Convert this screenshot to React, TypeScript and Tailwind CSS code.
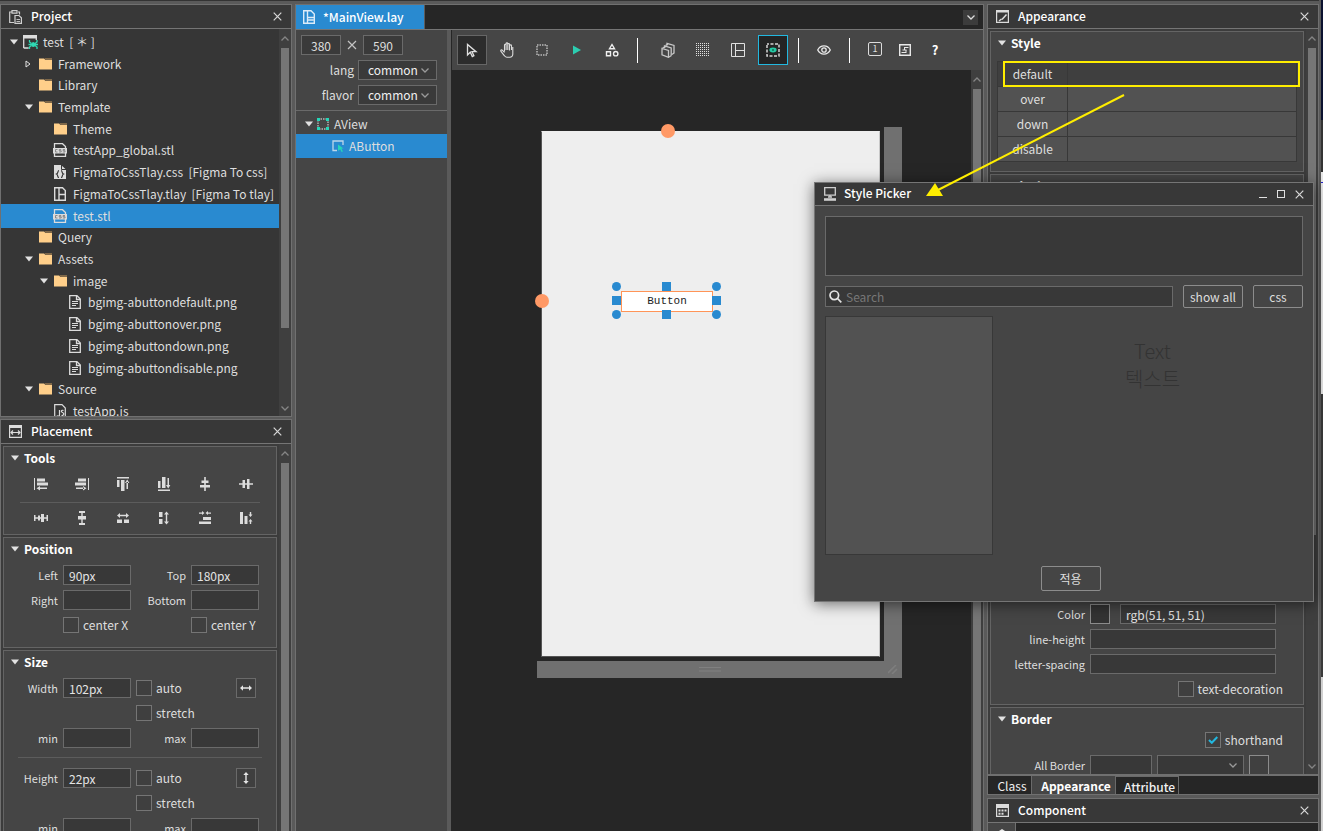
import React, { useId } from "react";

type Kids = { children?: React.ReactNode };

const CloseIcon = () => (
  <svg width="9" height="9" viewBox="0 0 9 9" fill="none" stroke="#d8d8d8" strokeWidth="1.2">
    <path d="M.7.7l7.6 7.6M8.3.7L.7 8.3" />
  </svg>
);

const Chevron = ({ up, tone = "#9a9a9a" }: { up?: boolean; tone?: string }) => (
  <svg width="8" height="5" viewBox="0 0 8 5" fill="none" stroke={tone} strokeWidth="1.3">
    <path d={up ? "M.5 4.5L4 1l3.500 3.500" : "M.5.5L4 4 7.500.5"} />
  </svg>
);

const Triangle = () => (
  <svg width="8" height="6" viewBox="0 0 8 6" fill="#e2e2e2">
    <path d="M0 .5h8L4 5.500z" />
  </svg>
);

const TriangleClosed = () => (
  <svg width="6" height="8" viewBox="0 0 6 8" fill="none" stroke="#e2e2e2">
    <path d="M1 1l4 3-4 3z" />
  </svg>
);

function Header({ icon, title }: { icon: React.ReactNode; title: string }) {
  return (
    <header className="flex h-6 shrink-0 items-center border-b border-[#757575] bg-[#383838] pl-2 pr-[9px]">
      <span className="flex w-[22px] items-center">{icon}</span>
      <h2 className="flex-1 pb-[2px] font-medium text-white">{title}</h2>
      <button aria-label={`Close ${title}`} className="p-0">
        <CloseIcon />
      </button>
    </header>
  );
}

function ScrollBar({ thumb, down }: { thumb: string; down?: boolean }) {
  return (
    <div aria-hidden="true" className="flex w-3 shrink-0 flex-col items-center bg-[#3f3f3f]">
      <div className="flex h-[19px] shrink-0 items-center justify-center">
        <Chevron up tone="#858585" />
      </div>
      <div className={`w-2 bg-[#767676] ${thumb}`} />
      {down && (
        <div className="mt-auto flex h-4 shrink-0 items-center">
          <Chevron tone="#858585" />
        </div>
      )}
    </div>
  );
}

/* ---------- project tree ---------- */

const Folder = () => (
  <svg className="ml-px" width="13" height="12" viewBox="0 0 13 12" fill="#ffcf8a">
    <path d="M0 .5h5l1.500 1.500H13V11.500H0z" />
    <path d="M5.500.5h7.500v1H6.500z" fill="#c79a5c" />
  </svg>
);

const AppIcon = () => (
  <svg width="15" height="14" viewBox="0 0 15 14" fill="none">
    <path d="M.7 13V1h12.600v4M.7 13h5" stroke="#dcdcdc" strokeWidth="1.300" />
    <path d="M0 0h14v3.500H0z" fill="#dcdcdc" />
    <g stroke="#2fd9b4" strokeWidth="1.300">
      <path d="M6.500 5v2l2 1.500M14 5v2l-2 1.500M5.500 9.500h9.500M6.500 14v-2l2-1.500M14 14v-2l-2-1.500" />
    </g>
    <ellipse cx="10.250" cy="9.500" rx="2" ry="2.600" fill="#2fd9b4" />
  </svg>
);

const CssBadge = () => (
  <svg width="14" height="14" viewBox="0 0 14 14" fill="none">
    <path d="M1.500 5V.7h8l3 2.800V5M1.500 10v3.300h11V10" stroke="#dcdcdc" strokeWidth="1.300" />
    <path d="M0 5h14v5.500H0z" fill="#dcdcdc" />
    <path
      d="M4.500 6.500H2.500v2.500h2M8.200 6.500H6.200v1.200h2V9H6M12 6.500h-2v1.200h2V9h-2.200"
      stroke="#777"
      strokeWidth=".8"
    />
  </svg>
);

const BraceFile = () => (
  <svg className="ml-px" width="12" height="14" viewBox="0 0 12 14" fill="none">
    <path d="M0 0h7l5 4.500V14H0z" fill="#dcdcdc" />
    <path d="M7.500 0v4.500H12" stroke="#363636" />
    <path
      d="M5 5.500C3.500 5.500 4.500 8 2.500 9c2 1 .5 3.500 2.500 3.500M7 5.500C8.500 5.500 7.500 8 9.500 9c-2 1-.5 3.500-2.500 3.500"
      stroke="#363636"
      strokeWidth="1.200"
    />
  </svg>
);

const LayoutFile = () => (
  <svg className="ml-px" width="12" height="14" viewBox="0 0 12 14" fill="none" stroke="#dcdcdc" strokeWidth="1.400">
    <path d="M.7.7h7.800l2.800 2.800v9.800H.7zM5 .7v12.600M5 7.500h6.300" />
  </svg>
);

const TextFile = () => (
  <svg className="ml-px" width="12" height="14" viewBox="0 0 12 14" fill="none" stroke="#dcdcdc" strokeWidth="1.300">
    <path d="M.7.7h7.300l3.300 3.300v9.300H.7z" />
    <path d="M7.500 1v3.500h3.800" />
    <path d="M3 6.500h6M3 8.500h6M3 10.500h4" strokeWidth="1" />
  </svg>
);

const JsFile = () => (
  <svg className="ml-px" width="12" height="14" viewBox="0 0 12 14" fill="none" stroke="#dcdcdc" strokeWidth="1.200">
    <path d="M3 13.300H.7V.7h7.300l3.300 3.300v9.300H10" />
    <path d="M5.500 6v5c0 1.500-2 1.500-2.500.5M9.500 6.500C7.500 5.500 6.500 8 8.500 8.500s1.500 3.500-1 2.700" />
  </svg>
);

type Node = {
  name: string;
  depth: string;
  icon: React.ReactNode;
  state?: "open" | "closed";
  selected?: boolean;
};

const pad0 = "pl-[9px]";
const pad1 = "pl-6";
const pad2 = "pl-[39px]";
const pad3 = "pl-[54px]";

const nodes: Node[] = [
  { name: "test  [ ＊ ]", depth: pad0, icon: <AppIcon />, state: "open" },
  { name: "Framework", depth: pad1, icon: <Folder />, state: "closed" },
  { name: "Library", depth: pad1, icon: <Folder /> },
  { name: "Template", depth: pad1, icon: <Folder />, state: "open" },
  { name: "Theme", depth: pad2, icon: <Folder /> },
  { name: "testApp_global.stl", depth: pad2, icon: <CssBadge /> },
  { name: "FigmaToCssTlay.css  [Figma To css]", depth: pad2, icon: <BraceFile /> },
  { name: "FigmaToCssTlay.tlay  [Figma To tlay]", depth: pad2, icon: <LayoutFile /> },
  { name: "test.stl", depth: pad2, icon: <CssBadge />, selected: true },
  { name: "Query", depth: pad1, icon: <Folder /> },
  { name: "Assets", depth: pad1, icon: <Folder />, state: "open" },
  { name: "image", depth: pad2, icon: <Folder />, state: "open" },
  { name: "bgimg-abuttondefault.png", depth: pad3, icon: <TextFile /> },
  { name: "bgimg-abuttonover.png", depth: pad3, icon: <TextFile /> },
  { name: "bgimg-abuttondown.png", depth: pad3, icon: <TextFile /> },
  { name: "bgimg-abuttondisable.png", depth: pad3, icon: <TextFile /> },
  { name: "Source", depth: pad1, icon: <Folder />, state: "open" },
  { name: "testApp.js", depth: pad2, icon: <JsFile /> },
];

function ProjectPanel() {
  return (
    <section className="flex h-[413px] shrink-0 flex-col border border-[#707070] bg-[#363636]">
      <Header
        title="Project"
        icon={
          <svg width="13" height="14" viewBox="0 0 13 14" fill="none" stroke="#cfcfcf" strokeWidth="1.200">
            <path d="M5 12.500H.7V2H3M9 2h1.500v2.500" />
            <path d="M3 .7h5v2.500H3z" />
            <path d="M6 5.500h4l2.400 2.200v5.700H6z" />
            <path d="M7.500 9.500h3.500M7.500 11.500h3.500" strokeWidth=".9" />
          </svg>
        }
      />
      <div className="flex min-h-0 flex-1">
        <div className="min-w-0 flex-1 overflow-hidden pt-[2px]">
          <ul className="flex h-[391px] flex-col">
            {nodes.map((n) => (
              <li key={n.name} className="flex min-h-0 flex-1 items-center">
                <div
                  className={`flex h-6 w-full shrink-0 items-center whitespace-pre ${n.depth} ${
                    n.selected ? "bg-[#298ad0]" : ""
                  }`}
                >
                  <span className="flex w-[13px] shrink-0 items-center">
                    {n.state === "open" && <Triangle />}
                    {n.state === "closed" && <TriangleClosed />}
                  </span>
                  <span className="flex w-5 shrink-0 items-center">{n.icon}</span>
                  <span>{n.name}</span>
                </div>
              </li>
            ))}
          </ul>
        </div>
        <ScrollBar thumb="h-[280px]" down />
      </div>
    </section>
  );
}

/* ---------- form pieces ---------- */

const fieldBox = "h-5 border border-[#6a6a6a] bg-[#383838] px-[5px] text-xs text-[#e4e4e4] outline-none";

function Check({ label, checked, id }: { label: string; checked?: boolean; id: string }) {
  return (
    <span className="flex h-5 items-center gap-1">
      <span className="relative flex">
        <input
          id={id}
          type="checkbox"
          defaultChecked={checked}
          className="peer size-4 appearance-none border border-[#757575] bg-[#3f3f3f]"
        />
        <svg
          className="pointer-events-none absolute left-[3px] top-1 hidden peer-checked:block"
          width="10"
          height="8"
          viewBox="0 0 10 8"
          fill="none"
          stroke="#22b8e0"
          strokeWidth="2"
        >
          <path d="M1 4l2.800 2.800L9.300 1" />
        </svg>
      </span>
      <label htmlFor={id} className="whitespace-nowrap">
        {label}
      </label>
    </span>
  );
}

function Section({ title, className, children }: Kids & { title: string; className: string }) {
  return (
    <section className={`shrink-0 overflow-hidden border border-[#646464] bg-[#454545] ${className}`}>
      <h3>
        <button className="flex h-[22px] items-center gap-[5px] pl-[7px] font-bold text-white">
          <Triangle />
          {title}
        </button>
      </h3>
      {children}
    </section>
  );
}

function Labelled({ label, value }: { label: string; value?: string }) {
  const id = useId();
  return (
    <>
      <label htmlFor={id} className="pr-[5px] text-right text-[11px]">
        {label}
      </label>
      <input id={id} defaultValue={value} className={`${fieldBox} w-full`} />
    </>
  );
}

const grid4 = "grid grid-cols-[56px_68px_60px_68px] items-center gap-y-[5px] pl-[3px]";

/* Each alignment glyph is a set of solid bars on a 14px square. */
const tools: { name: string; d: string }[] = [
  { name: "Align left", d: "M0 1h1v12H0zM3 1.500h8v3H3zM3 5.500h11v3H3zM5 10.500h8v1.500H5zM2.500 11.200L6 9v4.400z" },
  { name: "Align right", d: "M13 1h1v12h-1zM3 1.500h8v3H3zM0 5.500h11v3H0zM1 10.500h8v1.500H1zM11.500 11.200L8 9v4.400z" },
  { name: "Align top", d: "M1 0h12v1.500H1zM1 3h2.500v7H1zM5 3h3.500v11H5zM10.500 5h1.500v7h-1.500zM11.200 2.500L9 6h4.400z" },
  { name: "Align bottom", d: "M1 12.500h12V14H1zM1 4h2.500v7H1zM5 0h3.500v11H5zM10.500 1h1.500v7h-1.500zM11.200 11.500L9 8h4.400z" },
  { name: "Align center", d: "M6.200 0h1.600v14H6.200zM3.500 3.500h7v2.500h-7zM2 8h10v2.500H2z" },
  { name: "Align middle", d: "M0 6.200h14v1.600H0zM3.500 3h2.500v8H3.500zM8 2h2.500v10H8z" },
  { name: "Distribute horizontally", d: "M0 4h1.500v6H0zM1.500 6.300h12v1.400h-12zM4 4.500h2v5H4zM7 3h3v8H7zM12.500 4h1.500v6h-1.500z" },
  { name: "Distribute vertically", d: "M4 0h6v2H4zM6.300 2h1.400v10H6.300zM3 5h8v3.500H3zM4 12h6v2H4z" },
  { name: "Equal width", d: "M1 4.500l3-2.500v1.800h6V2l3 2.500L10 7V5.200H4V7zM1 8.500h5V12H1zM8 8.500h5V12H8z" },
  { name: "Equal height", d: "M2 1h3.500v5H2zM2 8h3.500v5H2zM9.500 .5l2.500 3h-1.800v7H12l-2.500 3-2.500-3h1.800v-7H7z" },
  { name: "Space rows", d: "M1 1.500h3V0l2.500 2L4 4V2.700H1zM13 1.500h-3V0L7.500 2 10 4V2.700h3zM5 6h8v3H5zM1 10.500h12V13H1z" },
  { name: "Space columns", d: "M1 1h3v12H1zM5.500 5h3v8h-3zM11.500 6L9.500 3.500h1.300V1h1.400v2.500h1.300zM11.500 8l2 2.500h-1.300V13h-1.400v-2.500H9.500z" },
];

function ToolRow({ items }: { items: typeof tools }) {
  return (
    <div className="grid grid-cols-[repeat(6,41px)] pl-4">
      {items.map((t) => (
        <button key={t.name} aria-label={t.name} className="flex h-[30px] items-center justify-center">
          <svg width="14" height="14" viewBox="0 0 14 14" fill="#dcdcdc">
            <path d={t.d} />
          </svg>
        </button>
      ))}
    </div>
  );
}

function SizeRows({ label, value, vertical }: { label: string; value: string; vertical?: boolean }) {
  const id = useId();
  return (
    <div className="flex flex-col gap-[5px]">
      <div className="flex items-center pl-[3px]">
        <label htmlFor={id} className="w-14 pr-[5px] text-right text-[11px]">
          {label}
        </label>
        <input id={id} defaultValue={value} className={`${fieldBox} mr-[5px] w-[68px]`} />
        <Check id={`${id}a`} label="auto" />
        <button
          aria-label={`Fill ${label.toLowerCase()}`}
          className="ml-auto mr-5 flex size-5 items-center justify-center border border-[#6a6a6a] bg-[#3f3f3f]"
        >
          <svg width="12" height="12" viewBox="0 0 12 12" fill="#e4e4e4">
            {vertical ? (
              <path d="M6 0l2.700 3H6.700v6h2L6 12 3.300 9h2V3h-2z" />
            ) : (
              <path d="M0 6l3-2.700v2h6v-2L12 6 9 8.700v-2H3v2z" />
            )}
          </svg>
        </button>
      </div>
      <div className="pl-[132px]">
        <Check id={`${id}s`} label="stretch" />
      </div>
      <div className={grid4}>
        <Labelled label="min" />
        <Labelled label="max" />
      </div>
    </div>
  );
}

function PlacementPanel() {
  return (
    <section className="flex min-h-0 flex-1 flex-col border border-b-0 border-[#707070] bg-[#3c3c3c]">
      <Header
        title="Placement"
        icon={
          <svg width="13" height="13" viewBox="0 0 13 13" fill="none" stroke="#dcdcdc" strokeWidth="1.200">
            <path d="M.6.6h11.800v11.800H.6z" />
            <path d="M0 0h13v3H0z" fill="#dcdcdc" stroke="none" />
            <path d="M2 7.500h9M4 5.500l-2 2 2 2M9 5.500l2 2-2 2" />
          </svg>
        }
      />
      <div className="flex min-h-0 flex-1">
        <div className="flex min-w-0 flex-1 flex-col gap-[2px] overflow-hidden pl-[2px] pr-[2px] pt-[2px]">
          <Section title="Tools" className="h-[89px]">
            <ToolRow items={tools.slice(0, 6)} />
            <hr className="mx-4 mt-[3px] border-[#5c5c5c]" />
            <ToolRow items={tools.slice(6)} />
          </Section>
          <Section title="Position" className="h-[111px]">
            <div className={`${grid4} pt-[5px]`}>
              <Labelled label="Left" value="90px" />
              <Labelled label="Top" value="180px" />
              <Labelled label="Right" />
              <Labelled label="Bottom" />
              <span className="col-start-2">
                <Check id="center-x" label="center X" />
              </span>
              <span className="col-start-4">
                <Check id="center-y" label="center Y" />
              </span>
            </div>
          </Section>
          <Section title="Size" className="h-[220px]">
            <div className="pt-[5px]">
              <SizeRows label="Width" value="102px" />
              <hr className="mx-[14px] mb-[10px] mt-[9px] border-[#5c5c5c]" />
              <SizeRows label="Height" value="22px" vertical />
            </div>
          </Section>
        </div>
        <ScrollBar thumb="flex-1" />
      </div>
    </section>
  );
}

/* ---------- editor ---------- */

function SmallSelect({ label }: { label: string }) {
  const id = useId();
  return (
    <div className="flex items-center justify-end gap-1 pr-[10px]">
      <label htmlFor={id}>{label}</label>
      <span className="relative">
        <select
          id={id}
          className="block h-5 w-[79px] appearance-none border border-[#6a6a6a] bg-[#3a3a3a] pl-[9px] leading-none text-[#f0f0f0]"
        >
          <option>common</option>
        </select>
        <span className="pointer-events-none absolute right-2 top-2">
          <Chevron />
        </span>
      </span>
    </div>
  );
}

const sizeBox = "h-5 w-10 border border-[#6a6a6a] bg-[#3a3a3a] text-center text-xs";

function Outline() {
  return (
    <aside className="w-[151px] shrink-0 bg-[#454545]">
      <div className="flex h-[81px] flex-col gap-[5px] border-b border-[#6a6a6a] pt-[5px]">
        <div className="flex items-center gap-[6px] pl-[5px]">
          <input aria-label="Canvas width" defaultValue="380" className={sizeBox} />
          <svg width="10" height="10" viewBox="0 0 10 10" stroke="#c4c4c4" strokeWidth="1.200">
            <path d="M1 1l8 8M9 1L1 9" />
          </svg>
          <input aria-label="Canvas height" defaultValue="590" className={sizeBox} />
        </div>
        <SmallSelect label="lang" />
        <SmallSelect label="flavor" />
      </div>
      <ul className="pt-[2px]">
        <li className="flex h-[21px] items-center pl-[9px]">
          <Triangle />
          <svg className="ml-1 mr-[5px]" width="12" height="12" viewBox="0 0 12 12" fill="none">
            <path d="M1 1h10v10H1z" stroke="#b8b8b8" strokeWidth="1.400" strokeDasharray="1.500 1" />
            <path d="M0 0h3v3H0zM9 0h3v3H9zM0 9h3v3H0zM9 9h3v3H9z" fill="#25d6b8" />
          </svg>
          AView
        </li>
        <li className="flex h-6 items-center bg-[#298ad0] pl-9">
          <svg className="mr-[5px]" width="12" height="12" viewBox="0 0 12 12" fill="none">
            <path d="M5 10.500H1V1h10v4" stroke="#bcd6ea" strokeWidth="1.300" />
            <path d="M6 4.500l5.500 4H9.400l1.500 3-1.300.5-1.400-2.800L6 11z" fill="#25d6b8" />
          </svg>
          AButton
        </li>
      </ul>
    </aside>
  );
}

function Tool({ name, className = "", children }: Kids & { name: string; className?: string }) {
  return (
    <button aria-label={name} className={`flex size-[30px] shrink-0 items-center justify-center ${className}`}>
      {children}
    </button>
  );
}

const Bar = ({ className }: { className: string }) => <span className={`h-[25px] w-px shrink-0 bg-white ${className}`} />;

function Toolbar() {
  return (
    <div className="flex h-10 shrink-0 items-center bg-[#464646] pl-[5px]">
      <div className="flex gap-[5px]">
        <Tool name="Select" className="border border-[#666] bg-[#2c2c2c]">
          <svg width="12" height="15" viewBox="0 0 12 15" fill="none" stroke="#e0e0e0" strokeWidth="1.300">
            <path d="M1.500 1.500v10.500l2.800-2.800 2 4.300 1.600-.8L6 8.700h4z" />
          </svg>
        </Tool>
        <Tool name="Pan">
          <svg width="14" height="16" viewBox="0 0 14 16" fill="none" stroke="#dcdcdc" strokeWidth="1.100">
            <path d="M4.500 9.500V3.200c0-1.200 1.600-1.200 1.600 0V8M6.100 8V1.800c0-1.200 1.700-1.200 1.700 0V8M7.800 8V2.400c0-1.200 1.700-1.200 1.700 0V8.500M9.500 8.500V3.800c0-1.200 2-1.200 2 0V8M4.500 10.500L2.500 8.300C1.500 7.300.2 8.300 1 9.300l3.500 4.500c.7 1 1.500 1.500 2.500 1.500h3c1.500 0 2.800-1.500 2.800-3V5" />
          </svg>
        </Tool>
        <Tool name="Area select">
          <svg width="12" height="12" viewBox="0 0 12 12" fill="none">
            <path d="M1 1h10v10H1z" stroke="#9c9c9c" strokeWidth="2" strokeDasharray="1.500 1" />
          </svg>
        </Tool>
        <Tool name="Run">
          <svg width="8" height="10" viewBox="0 0 8 10" fill="#2ccdb0">
            <path d="M0 .5l8 4.500-8 4.500z" />
          </svg>
        </Tool>
        <Tool name="Shapes">
          <svg width="14" height="14" viewBox="0 0 14 14" fill="none" stroke="#f0f0f0" strokeWidth="1.400">
            <path d="M7 1.500l2.500 4.200h-5zM1.500 8.700h4v4h-4z" />
            <circle cx="10.700" cy="10.700" r="2.200" />
          </svg>
        </Tool>
      </div>
      <Bar className="ml-[10px] mr-[15px]" />
      <div className="flex gap-[5px]">
        <Tool name="Layers">
          <svg width="15" height="16" viewBox="0 0 15 16" fill="none" stroke="#c8c8c8" strokeWidth="1.300">
            <path d="M1 6.500L7.500 8.500v6.800L1 12.800z" />
            <path d="M3.500 6.200V3.800l6.700 2.200v7.500M6 3.500V1.300l7 2.200v7.800" />
            <path d="M1.500 6.200l3-1.500M4.500 3.500l2.500-1.500M8 15l2.500-1.500M10.700 12.500l2.500-1.500" />
          </svg>
        </Tool>
        <Tool name="Grid">
          <svg width="14" height="14" viewBox="0 0 14 14" stroke="#e0e0e0" strokeWidth="1" strokeDasharray="1 1">
            <path d="M0 .5h14M0 2.500h14M0 4.500h14M0 6.500h14M0 8.500h14M0 10.500h14M0 12.500h14" />
          </svg>
        </Tool>
        <Tool name="Split view">
          <svg width="14" height="14" viewBox="0 0 14 14" fill="none" stroke="#e0e0e0">
            <path d="M.5.5h13v13H.5zM4.500.5v13M4.500 7.500h9" />
          </svg>
        </Tool>
        <Tool name="Preview bounds" className="border border-[#22b8e0] bg-[#242424]">
          <svg width="14" height="14" viewBox="0 0 14 14" fill="none">
            <path d="M1 1h12v12H1z" stroke="#d4d4d4" strokeWidth="1.500" strokeDasharray="3 1.500" strokeDashoffset="1" />
            <ellipse cx="7" cy="7" rx="3.600" ry="2.400" fill="#25c9a4" />
            <circle cx="7" cy="7" r="1" fill="#186a58" />
          </svg>
        </Tool>
      </div>
      <Bar className="mx-[10px]" />
      <Tool name="Preview">
        <svg width="14" height="10" viewBox="0 0 14 10" fill="none" stroke="#e8e8e8" strokeWidth="1.300">
          <path d="M.7 5C3.500-.4 10.500-.4 13.300 5 10.500 10.400 3.500 10.400.7 5z" />
          <circle cx="7" cy="5" r="2.200" />
        </svg>
      </Tool>
      <Bar className="mx-[10px]" />
      <Tool name="Actual size">
        <span className="mb-[3px] flex size-[14px] items-center justify-center rounded-xs border border-[#dcdcdc] text-[9px] leading-none">
          1
        </span>
      </Tool>
      <Tool name="Script">
        <svg width="12" height="12" viewBox="0 0 12 12" fill="none" stroke="#e8e8e8">
          <path d="M.7.7h10.600v10.600H.7z" strokeWidth="1.400" />
          <path d="M5 3.500h4.500M3.500 6h4M2.500 8.500h4.500M5.500 3v3M7 6v3" strokeWidth="1" />
        </svg>
      </Tool>
      <Tool name="Help">
        <span className="text-[13px] font-bold text-white">?</span>
      </Tool>
    </div>
  );
}

function Stage() {
  return (
    <div className="relative min-w-0 flex-1 overflow-hidden bg-[#262626]">
      <div className="absolute left-[432px] top-[57px] h-[551px] w-[18px] bg-[#707070]" />
      <div className="absolute left-[85px] top-[591px] flex h-[17px] w-[365px] items-center justify-end bg-[#707070] pr-1">
        <svg className="mr-[167px]" width="22" height="5" viewBox="0 0 22 5" stroke="#808080">
          <path d="M0 .5h22M0 4h22" />
        </svg>
        <svg width="10" height="9" viewBox="0 0 10 9" stroke="#7e7e7e" strokeWidth="1.600">
          <path d="M0 8l8-8M4 9l5-5" />
        </svg>
      </div>
      <div className="absolute left-[89px] top-[61px] h-[526px] w-[339px] border border-[#555] border-r-[#c8c8c8] border-t-[#eee] bg-[#eee]">
        <span className="absolute -top-[8px] left-[119px] size-[14px] rounded-full bg-[#ff9966]" />
        <span className="absolute -left-[7px] top-[162px] size-[14px] rounded-full bg-[#ff9966]" />
        <div className="absolute left-[70px] top-[150px] h-[38px] w-[110px]">
          <button className="absolute left-[9px] top-[9px] h-[21px] w-[92px] border border-solid border-[#ff9457] bg-white font-['Liberation_Mono',monospace] text-[11px] leading-none text-[#222]">
            Button
          </button>
          <span className="absolute left-0 top-0 size-[9px] rounded-full bg-[#298ad0]" />
          <span className="absolute left-[50px] top-0 size-[9px] bg-[#298ad0]" />
          <span className="absolute left-[100px] top-0 size-[9px] rounded-full bg-[#298ad0]" />
          <span className="absolute left-0 top-[14px] size-[9px] bg-[#298ad0]" />
          <span className="absolute left-[100px] top-[14px] size-[9px] bg-[#298ad0]" />
          <span className="absolute left-0 top-[28px] size-[9px] rounded-full bg-[#298ad0]" />
          <span className="absolute left-[50px] top-[28px] size-[9px] bg-[#298ad0]" />
          <span className="absolute left-[100px] top-[28px] size-[9px] rounded-full bg-[#298ad0]" />
        </div>
      </div>
    </div>
  );
}

function Editor() {
  return (
    <main className="flex min-w-0 flex-1 flex-col border border-b-0 border-[#707070] bg-[#262626]">
      <div className="flex h-[25px] shrink-0 items-center border-b border-[#757575]">
        <button className="flex h-full w-[129px] items-center gap-2 border-r border-[#5c5c5c] bg-[#298ad0] pl-[7px] font-medium text-white">
          <svg width="12" height="14" viewBox="0 0 12 14" fill="none" stroke="#dcecf8" strokeWidth="1.400">
            <path d="M.7.7h7.300l3.300 3.300v9.300H.7zM4.500 .7v12.600M4.500 7.500h6.800M4.500 10h6" />
          </svg>
          *MainView.lay
        </button>
        <button aria-label="Open documents" className="ml-auto mr-[5px] flex size-[15px] items-center justify-center bg-[#3c3c3c]">
          <Chevron tone="#dcdcdc" />
        </button>
      </div>
      <div className="flex min-h-0 flex-1">
        <Outline />
        <div className="w-1 shrink-0 bg-[#5a5a5a]" />
        <div className="flex min-w-0 flex-1 flex-col border-l border-[#262626]">
          <Toolbar />
          <div className="flex min-h-0 flex-1">
            <Stage />
            <ScrollBar thumb="flex-1" />
          </div>
        </div>
      </div>
    </main>
  );
}

/* ---------- right column ---------- */

function AppearancePanel() {
  return (
    <section className="flex h-[791px] shrink-0 flex-col border border-[#707070] bg-[#3c3c3c]">
      <Header
        title="Appearance"
        icon={
          <svg width="13" height="13" viewBox="0 0 13 13" fill="none" stroke="#dcdcdc" strokeWidth="1.200">
            <path d="M.6.6h11.800v11.800H.6z" />
            <path d="M0 0h13v2.500H0z" fill="#dcdcdc" stroke="none" />
            <path d="M10.500 4.500l-4.500 5M5.500 9l-2.500 2" strokeWidth="1.500" />
          </svg>
        }
      />
      <div className="flex min-h-0 flex-1">
        <div className="flex min-w-0 flex-1 flex-col gap-[2px] overflow-hidden px-[2px] pt-[2px]">
          <Section title="Style" className="h-[141px]">
            <table className="ml-[6px] mt-[7px] w-[300px] table-fixed border-collapse text-center">
              <tbody>
                {["default", "over", "down", "disable"].map((s, i) => (
                  <tr key={s} className={i === 0 ? "bg-[#3f3f3f]" : "bg-[#525252]"}>
                    <th scope="row" className="h-[25px] w-[70px] border border-[#383838] p-0 font-normal">
                      {s}
                    </th>
                    <td className="border border-[#383838] p-0" />
                  </tr>
                ))}
              </tbody>
            </table>
          </Section>
          <Section title="Display" className="flex h-[531px] flex-col">
            <div className="mb-[5px] mt-auto flex flex-col gap-[5px] pr-[27px]">
              <div className="flex items-center">
                <label htmlFor="color" className="w-[99px] pr-[5px] text-right text-[11px]">
                  Color
                </label>
                <button aria-label="Pick color" className="mr-[10px] size-5 border border-[#8c8c8c] bg-[#333]" />
                <input id="color" defaultValue="rgb(51, 51, 51)" className={`${fieldBox} min-w-0 flex-1`} />
              </div>
              <div className="grid grid-cols-[99px_1fr] items-center gap-y-[5px]">
                <Labelled label="line-height" />
                <Labelled label="letter-spacing" />
              </div>
              <div className="-mr-[7px] flex justify-end">
                <Check id="decoration" label="text-decoration" />
              </div>
            </div>
          </Section>
          <Section title="Border" className="h-[160px]">
            <div className="flex justify-end pr-5">
              <Check id="shorthand" label="shorthand" checked />
            </div>
            <div className="mt-[5px] flex items-center">
              <label htmlFor="all-border" className="w-[99px] pr-[5px] text-right text-[11px]">
                All Border
              </label>
              <input id="all-border" className={`${fieldBox} mr-[5px] w-[62px]`} />
              <span className="relative mr-[5px]">
                <select aria-label="Border style" className={`${fieldBox} block w-[87px] appearance-none`}>
                  <option></option>
                </select>
                <span className="pointer-events-none absolute right-[7px] top-2">
                  <Chevron />
                </span>
              </span>
              <button aria-label="Border color" className="size-5 border border-[#8c8c8c] bg-[#404040]" />
            </div>
          </Section>
        </div>
        <ScrollBar thumb="h-[487px]" down />
      </div>
      <nav className="flex h-[20px] shrink-0 border-t-2 border-[#707070] bg-[#262626] text-[#f0f0f0]">
        <button className="w-11 border-r border-[#6a6a6a] pl-[5px]">Class</button>
        <button className="w-[83px] bg-[#454545] pl-[5px] font-bold text-white">Appearance</button>
        <button className="w-16 border-x border-t border-[#6a6a6a] pl-[5px] font-medium">Attribute</button>
      </nav>
    </section>
  );
}

function ComponentPanel() {
  return (
    <section className="flex min-h-0 flex-1 flex-col overflow-hidden border border-b-0 border-[#707070] bg-[#262626]">
      <Header
        title="Component"
        icon={
          <svg width="13" height="13" viewBox="0 0 13 13" fill="none">
            <path d="M.6.6h11.800v11.800H.6z" stroke="#dcdcdc" strokeWidth="1.200" />
            <path d="M0 0h13v4H0zM2.500 5.500h2v2h-2zM5.500 5.500h2v2h-2zM8.500 5.500h2v2h-2zM2.500 8.800h2v2h-2zM5.500 8.800h2v2h-2z" fill="#dcdcdc" />
          </svg>
        }
      />
      <div className="h-8 w-7 shrink-0 border-r border-[#707070] bg-[#454545] pt-[6px]">
        <svg className="mx-auto" width="12" height="12" viewBox="0 0 12 12" fill="#e8e8e8">
          <path d="M6 0l3 2-3 2-3-2zM2 4l3 2v4L2 8z" />
        </svg>
      </div>
    </section>
  );
}

/* ---------- floating window ---------- */

function StylePicker() {
  return (
    <div
      role="dialog"
      aria-label="Style Picker"
      className="absolute right-[9px] top-[182px] w-[500px] border border-[#757575] bg-[#454545] shadow-[0_2px_14px_rgba(0,0,0,0.55)]"
    >
      <header className="flex h-[23px] items-center border-b border-[#757575] bg-[#383838] pl-[9px] pr-[9px]">
        <svg className="mr-2" width="12" height="14" viewBox="0 0 12 14" fill="none" stroke="#cfcfcf" strokeWidth="1.300">
          <path d="M.7.7h10.600v7.500H.7zM4 10h4M6 8v2.500" />
          <path d="M0 12.500h12" strokeWidth="2.600" />
        </svg>
        <h2 className="flex-1 pb-[2px] font-medium text-white">Style Picker</h2>
        <div className="flex items-center gap-[10px]">
          <button aria-label="Minimize" className="mt-[7px] h-px w-2 bg-[#e0e0e0]" />
          <button aria-label="Maximize" className="size-2 border border-[#e0e0e0]" />
          <button aria-label="Close Style Picker">
            <CloseIcon />
          </button>
        </div>
      </header>
      <div className="px-[10px] pb-[10px] pt-[10px]">
        <textarea aria-label="Applied styles" className="block h-[60px] w-full resize-none border border-[#6a6a6a] bg-[#383838]" />
        <div className="mt-[9px] flex items-center gap-[10px]">
          <div className="flex h-[21px] flex-1 items-center gap-1 border border-[#6a6a6a] bg-[#383838] pl-[3px]">
            <svg width="13" height="13" viewBox="0 0 13 13" fill="none" stroke="#e4e4e4" strokeWidth="1.700">
              <circle cx="5.300" cy="5.300" r="4.300" />
              <path d="M8.500 8.500l3.800 3.800" />
            </svg>
            <input
              type="search"
              aria-label="Search styles"
              placeholder="Search"
              className="h-full min-w-0 flex-1 bg-transparent outline-none placeholder:text-[#777]"
            />
          </div>
          <button className="h-[23px] w-[60px] rounded-xs border border-[#8c8c8c]">show all</button>
          <button className="h-[23px] w-[50px] rounded-xs border border-[#8c8c8c]">css</button>
        </div>
        <div className="mt-2 flex">
          <ul aria-label="Styles" className="h-[239px] w-[168px] border border-[#383838] bg-[#525252]" />
          <div className="flex-1 pl-[9px] pt-[21px] text-center text-xl font-light leading-7 text-[#333]">
            <p>Text</p>
            <p>텍스트</p>
          </div>
        </div>
        <div className="mt-[11px] flex justify-center pl-[13px]">
          <button className="h-[25px] w-[60px] rounded-xs border border-[#8c8c8c]">적용</button>
        </div>
      </div>
    </div>
  );
}

function Callout() {
  return (
    <>
      <div className="pointer-events-none absolute right-[23px] top-[61px] h-[26px] w-[297px] border-2 border-[#ffee00]" />
      <svg className="pointer-events-none absolute right-[197px] top-[92px]" width="202" height="108" viewBox="0 0 202 108">
        <path d="M200 3L14 98" stroke="#ffee00" strokeWidth="2" />
        <path d="M2 104l9-13 8 13z" fill="#ffee00" />
      </svg>
    </>
  );
}

export default function App() {
  return (
    <div className="relative flex h-screen overflow-hidden bg-[#5a5a5a] font-['Noto_Sans_CJK_KR','Noto_Sans',sans-serif] text-xs leading-5 text-[#dedede]">
      <div className="flex min-w-0 flex-1 gap-[3px] border-t border-[#333] pt-[3px]">
        <div className="flex w-[292px] shrink-0 flex-col gap-[2px]">
          <ProjectPanel />
          <PlacementPanel />
        </div>
        <Editor />
        <div className="flex w-[332px] shrink-0 flex-col gap-[3px]">
          <AppearancePanel />
          <ComponentPanel />
        </div>
      </div>
      <div className="ml-[2px] flex w-[2px] shrink-0 flex-col">
        <div className="h-[120px] bg-[#0c1230]" />
        <div className="h-[52px] bg-[#333]" />
        <div className="h-[10px] bg-[#e8e8e8]" />
        <div className="h-px bg-[#2222cc]" />
        <div className="h-[211px] bg-[#e8e8e8]" />
        <div className="h-[283px] bg-[#3a3a3a]" />
        <div className="flex-1 bg-[#d0d0d0]" />
      </div>
      <StylePicker />
      <Callout />
    </div>
  );
}
